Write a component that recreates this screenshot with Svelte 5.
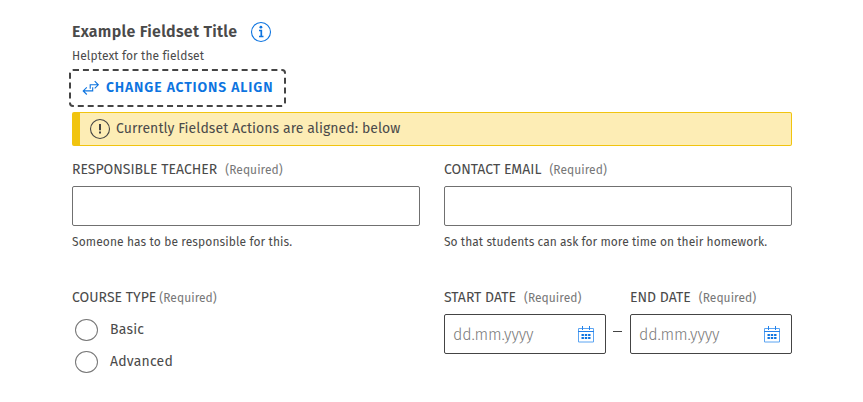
<script>
  const textFields = [
    { label: 'RESPONSIBLE TEACHER', help: 'Someone has to be responsible for this.', key: 'teacher' },
    { label: 'CONTACT EMAIL', help: 'So that students can ask for more time on their homework.', key: 'email' }
  ];
  const dates = [
    { label: 'START DATE', key: 'start' },
    { label: 'END DATE', key: 'end' }
  ];
  const options = ['Basic', 'Advanced'];
</script>

<main>
  <header>
    <h1>Example Fieldset Title</h1>
    <svg class="info" width="22" height="22" viewBox="0 0 22 22" fill="none" stroke="#0d74e0" aria-label="Info">
      <circle cx="11" cy="11" r="9.5" stroke-width="1.1" />
      <path d="M9 9.5h2.3v6M9 15.5h4.5" stroke-width="1.7" />
      <circle cx="10.9" cy="6.2" r="1.4" fill="#0d74e0" stroke="none" />
    </svg>
  </header>
  <p class="helptext">Helptext for the fieldset</p>

  <button type="button" class="action">
    <svg width="18" height="16" viewBox="0 0 18 16" fill="none" stroke="#0d74e0" stroke-width="1.1" aria-hidden="true">
      <path d="M12.7 1.2 16.3 4.8 12.7 8.4M16 4.8H8.2v3.9M10.7 7.3v3.6H1.2M4.8 7.3 1.2 10.9 4.8 14.5" />
    </svg>
    <span class="action-text">CHANGE ACTIONS ALIGN</span>
  </button>

  <div class="alert">
    <svg width="22" height="22" viewBox="0 0 22 22" fill="none" aria-hidden="true">
      <circle cx="11" cy="11" r="9.5" stroke="#444" stroke-width="1.1" />
      <path d="M11 6v6.2M11 13.6v2" stroke="#444" stroke-width="2" />
    </svg>
    <span class="alert-text">Currently Fieldset Actions are aligned: below</span>
  </div>

  <section class="columns fields">
    {#each textFields as f}
      <div class="col">
        <label for={f.key}><span>{f.label}</span><span class="req">(Required)</span></label>
        <input id={f.key} type="text" />
        <p class="help {f.key}">{f.help}</p>
      </div>
    {/each}
  </section>

  <section class="columns">
    <div class="col">
      <div class="legend"><span>COURSE TYPE</span><span class="req">(Required)</span></div>
      {#each options as o}
        <label class="radio"><input type="radio" name="course" /><span>{o}</span></label>
      {/each}
    </div>
    <div class="col dates">
      {#each dates as d, i}
        {#if i > 0}<span class="to"></span>{/if}
        <div class="date">
          <label for={d.key}><span>{d.label}</span><span class="req">(Required)</span></label>
          <div class="box">
            <input id={d.key} type="text" placeholder="dd.mm.yyyy" />
            <svg width="16" height="17" viewBox="0 0 16 17" fill="none" stroke="#5ba4f2" aria-hidden="true">
              <path d="M.5 2.5h15v13.5H.5z" />
              <path d="M0 5.5h16M4.5 0v4M11.5 0v4" stroke="#2482ea" />
              <path d="M3.5 9h9M3.5 12h9" stroke-width="2" stroke-dasharray="2.4 .9" stroke="#0d74e0" />
            </svg>
          </div>
        </div>
      {/each}
    </div>
  </section>
</main>

<style>
  :global(body) { background: #fff; }
  main {
    box-sizing: border-box;
    width: 863px;
    height: 402px;
    padding: 20px 71px 0 72px;
    overflow: hidden;
    color: #4a4a4a;
    font-family: "Fira Sans", "Noto Sans", sans-serif;
    font-stretch: 87.5%;
    font-size: 14px;
    white-space: nowrap;
  }
  h1, p { margin: 0; }
  header { display: flex; align-items: center; height: 24px; }
  h1 { width: 178px; font-size: 16px; font-weight: 600; line-height: 24px; letter-spacing: 0.27px; }
  .helptext { margin-top: 4px; font-size: 12px; line-height: 16px; letter-spacing: 0.08px; }
  .action {
    box-sizing: border-box;
    display: flex;
    align-items: center;
    width: 217px;
    height: 38px;
    margin: 5px 0 0 -3px;
    padding: 0 0 1px 11px;
    border: 2px dashed #444;
    border-radius: 4px;
    background: none;
    color: #0d74e0;
    font: inherit;
    font-weight: 600;
    font-stretch: 87.5%;
    letter-spacing: 0.85px;
  }
  .action-text { margin-left: 6px; }
  .alert {
    box-sizing: border-box;
    display: flex;
    align-items: center;
    width: 720px;
    height: 34px;
    margin-top: 5px;
    padding-left: 9px;
    border: 1px solid #f1c40f;
    border-left-width: 8px;
    border-radius: 2px;
    background: #fdedb5;
  }
  .alert-text { margin-left: 5px; padding-bottom: 2px; letter-spacing: 0.07px; }
  .columns { display: flex; gap: 24px; width: 720px; }
  .fields { height: 128px; margin-top: 14px; }
  .col { width: 348px; }
  label, .legend { display: flex; align-items: baseline; height: 26px; line-height: 20px; }
  .req { margin-left: 8px; color: #777; font-size: 12px; letter-spacing: 0.05px; }
  .legend .req { margin-left: 3px; }
  input[type='text'] {
    box-sizing: border-box;
    display: block;
    width: 100%;
    height: 40px;
    border: 1px solid #707070;
    border-radius: 2px;
    background: #fff;
    outline: none;
  }
  .help { margin-top: 8px; font-size: 12px; line-height: 16px; letter-spacing: 0.1px; }
  .help.email { letter-spacing: 0.04px; }
  .radio { align-items: center; height: 32px; letter-spacing: 0.22px; }
  .radio input {
    appearance: none;
    box-sizing: border-box;
    width: 23px;
    height: 22px;
    margin: 0 12px 0 3px;
    border: 1px solid #777;
    border-radius: 50%;
  }
  .dates { display: flex; }
  .date { width: 162px; }
  .to { width: 9px; height: 1px; margin: 43px 8px 0 7px; background: #444; }
  .box { position: relative; }
  .box input { padding: 0 8px; border-color: #444; font: inherit; font-size: 16px; font-weight: 300; font-stretch: 87.5%; letter-spacing: -0.15px; }
  .box input::placeholder { color: #7a7a7a; opacity: 1; }
  .box svg { position: absolute; right: 12px; top: 12px; }
</style>
